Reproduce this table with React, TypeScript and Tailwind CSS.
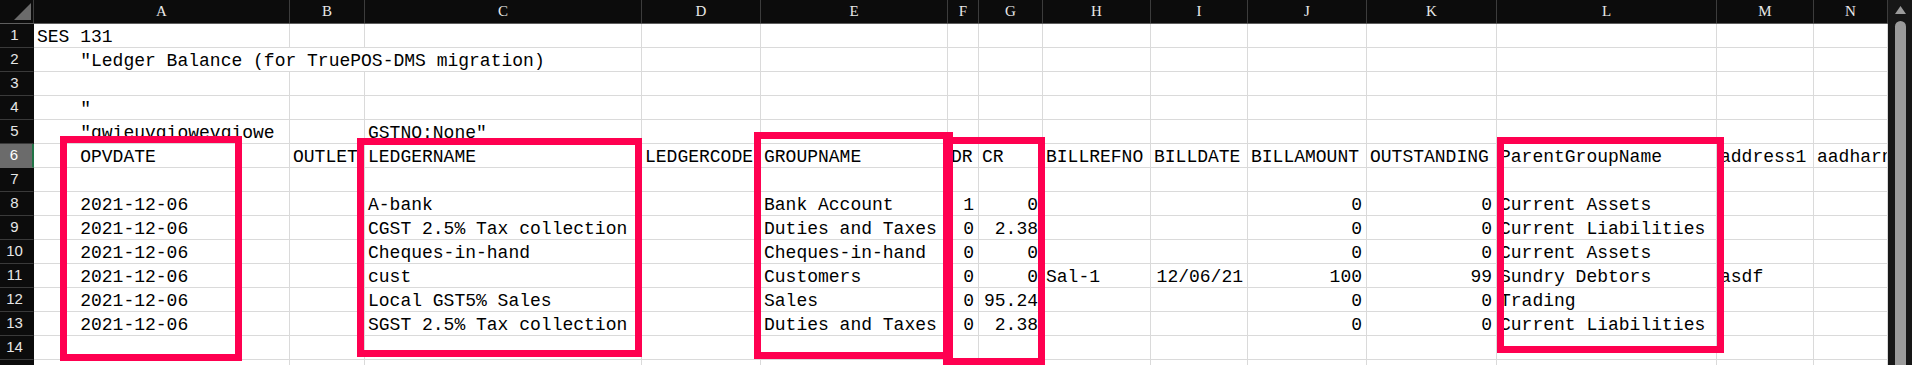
const cols = [
  { key: "A", w: "w-[256px]" },
  { key: "B", w: "w-[75px]" },
  { key: "C", w: "w-[277px]" },
  { key: "D", w: "w-[119px]" },
  { key: "E", w: "w-[187px]" },
  { key: "F", w: "w-[31px]" },
  { key: "G", w: "w-[64px]" },
  { key: "H", w: "w-[108px]" },
  { key: "I", w: "w-[97px]" },
  { key: "J", w: "w-[119px]" },
  { key: "K", w: "w-[130px]" },
  { key: "L", w: "w-[220px]" },
  { key: "M", w: "w-[97px]" },
  { key: "N", w: "w-[74px]" },
];

const e = "";
const d = "    2021-12-06";

// one entry per row, 14 cells A..N
const rows: string[][] = [
  ["SES 131", e, e, e, e, e, e, e, e, e, e, e, e, e],
  ['    "Ledger Balance (for TruePOS-DMS migration)', e, e, e, e, e, e, e, e, e, e, e, e, e],
  [e, e, e, e, e, e, e, e, e, e, e, e, e, e],
  ['    "', e, e, e, e, e, e, e, e, e, e, e, e, e],
  ['    "qwieuvqiowevqiowe', e, 'GSTNO:None"', e, e, e, e, e, e, e, e, e, e, e],
  ["    OPVDATE", "OUTLET", "LEDGERNAME", "LEDGERCODE", "GROUPNAME", "DR", "CR", "BILLREFNO", "BILLDATE", "BILLAMOUNT", "OUTSTANDING", "ParentGroupName", "address1", "aadharno"],
  [e, e, e, e, e, e, e, e, e, e, e, e, e, e],
  [d, e, "A-bank", e, "Bank Account", "1", "0", e, e, "0", "0", "Current Assets", e, e],
  [d, e, "CGST 2.5% Tax collection", e, "Duties and Taxes", "0", "2.38", e, e, "0", "0", "Current Liabilities", e, e],
  [d, e, "Cheques-in-hand", e, "Cheques-in-hand", "0", "0", e, e, "0", "0", "Current Assets", e, e],
  [d, e, "cust", e, "Customers", "0", "0", "Sal-1", "12/06/21", "100", "99", "Sundry Debtors", "asdf", e],
  [d, e, "Local GST5% Sales", e, "Sales", "0", "95.24", e, e, "0", "0", "Trading", e, e],
  [d, e, "SGST 2.5% Tax collection", e, "Duties and Taxes", "0", "2.38", e, e, "0", "0", "Current Liabilities", e, e],
  [e, e, e, e, e, e, e, e, e, e, e, e, e, e],
  [e, e, e, e, e, e, e, e, e, e, e, e, e, e],
];

const isNum = (v: string) => /^\d[\d./]*$/.test(v);

function Cell({ value, w }: { value: string; w: string }) {
  return (
    <div
      className={`${w} shrink-0 h-full border-r border-[#dadada] overflow-hidden whitespace-pre pl-[3px] pr-[4px] pt-[4px] leading-[19px] ${
        isNum(value) ? "text-right" : "text-left"
      }`}
    >
      {value}
    </div>
  );
}

function Row({ n, cells }: { n: number; cells: string[] }) {
  const selected = n === 6;
  return (
    <div className="flex h-[24px] shrink-0">
      <div
        className={`w-[34px] shrink-0 h-full flex items-center justify-center pr-[4px] text-[15px] font-['Liberation_Sans',sans-serif] border-b ${
          selected
            ? "bg-[#6b6b6b] text-white border-r-2 border-r-[#217346] border-b-[#6b6b6b]"
            : "bg-[#0c0c0c] text-[#e6e6e6] border-r border-r-[#0c0c0c] border-b-[#3a3a3a]"
        }`}
      >
        {n}
      </div>
      <div className="flex h-full border-b border-[#dadada] font-['Liberation_Mono',monospace] text-[18px] text-black">
        {n === 2 ? (
          <>
            <Cell value={cells[0]} w="w-[608px]" />
            {cols.slice(3).map((c, i) => (
              <Cell key={c.key} value={cells[i + 3]} w={c.w} />
            ))}
          </>
        ) : (
          cols.map((c, i) => <Cell key={c.key} value={cells[i]} w={c.w} />)
        )}
      </div>
    </div>
  );
}

export default function App() {
  return (
    <div className="relative flex w-[1912px] h-[365px] overflow-hidden bg-white">
      <div className="flex flex-col w-[1888px] shrink-0 overflow-hidden">
        {/* column letters */}
        <div className="flex h-[24px] shrink-0 bg-[#0c0c0c] border-b border-[#5e5e5e] font-['Liberation_Serif',serif] text-[15px] text-[#e8e8e8]">
          <div className="w-[34px] shrink-0 h-full flex items-end justify-end pr-[2px] pb-[3px] border-r border-[#3c3c3c]">
            <svg width="17" height="17" viewBox="0 0 17 17">
              <polygon points="17,0 17,17 0,17" fill="#6b6b6b" />
            </svg>
          </div>
          {cols.map((c) => (
            <div
              key={c.key}
              className={`${c.w} shrink-0 h-full flex items-center justify-center border-r border-[#3c3c3c]`}
            >
              {c.key}
            </div>
          ))}
        </div>
        {rows.map((r, i) => (
          <Row key={i} n={i + 1} cells={r} />
        ))}
      </div>

      {/* vertical scrollbar */}
      <div className="w-[24px] shrink-0 bg-[#171717] flex flex-col items-center pt-[6px]">
        <svg width="11" height="8" viewBox="0 0 11 8">
          <polygon points="5.5,0 11,8 0,8" fill="#9b9b9b" />
        </svg>
        <div className="mt-[7px] w-[11px] flex-1 rounded-t-full bg-[#9b9b9b]" />
      </div>

      {/* red highlight boxes */}
      <div className="absolute left-[60px] top-[136px] w-[182px] h-[225px] border-[7px] border-[#ff0050]" />
      <div className="absolute left-[357px] top-[138px] w-[285px] h-[219px] border-[7px] border-[#ff0050]" />
      <div className="absolute left-[754px] top-[132px] w-[199px] h-[227px] border-[7px] border-[#ff0050]" />
      <div className="absolute left-[943px] top-[137px] w-[102px] h-[228px] border-[7px] border-[#ff0050]" />
      <div className="absolute left-[1497px] top-[137px] w-[227px] h-[216px] border-[7px] border-[#ff0050]" />
    </div>
  );
}
